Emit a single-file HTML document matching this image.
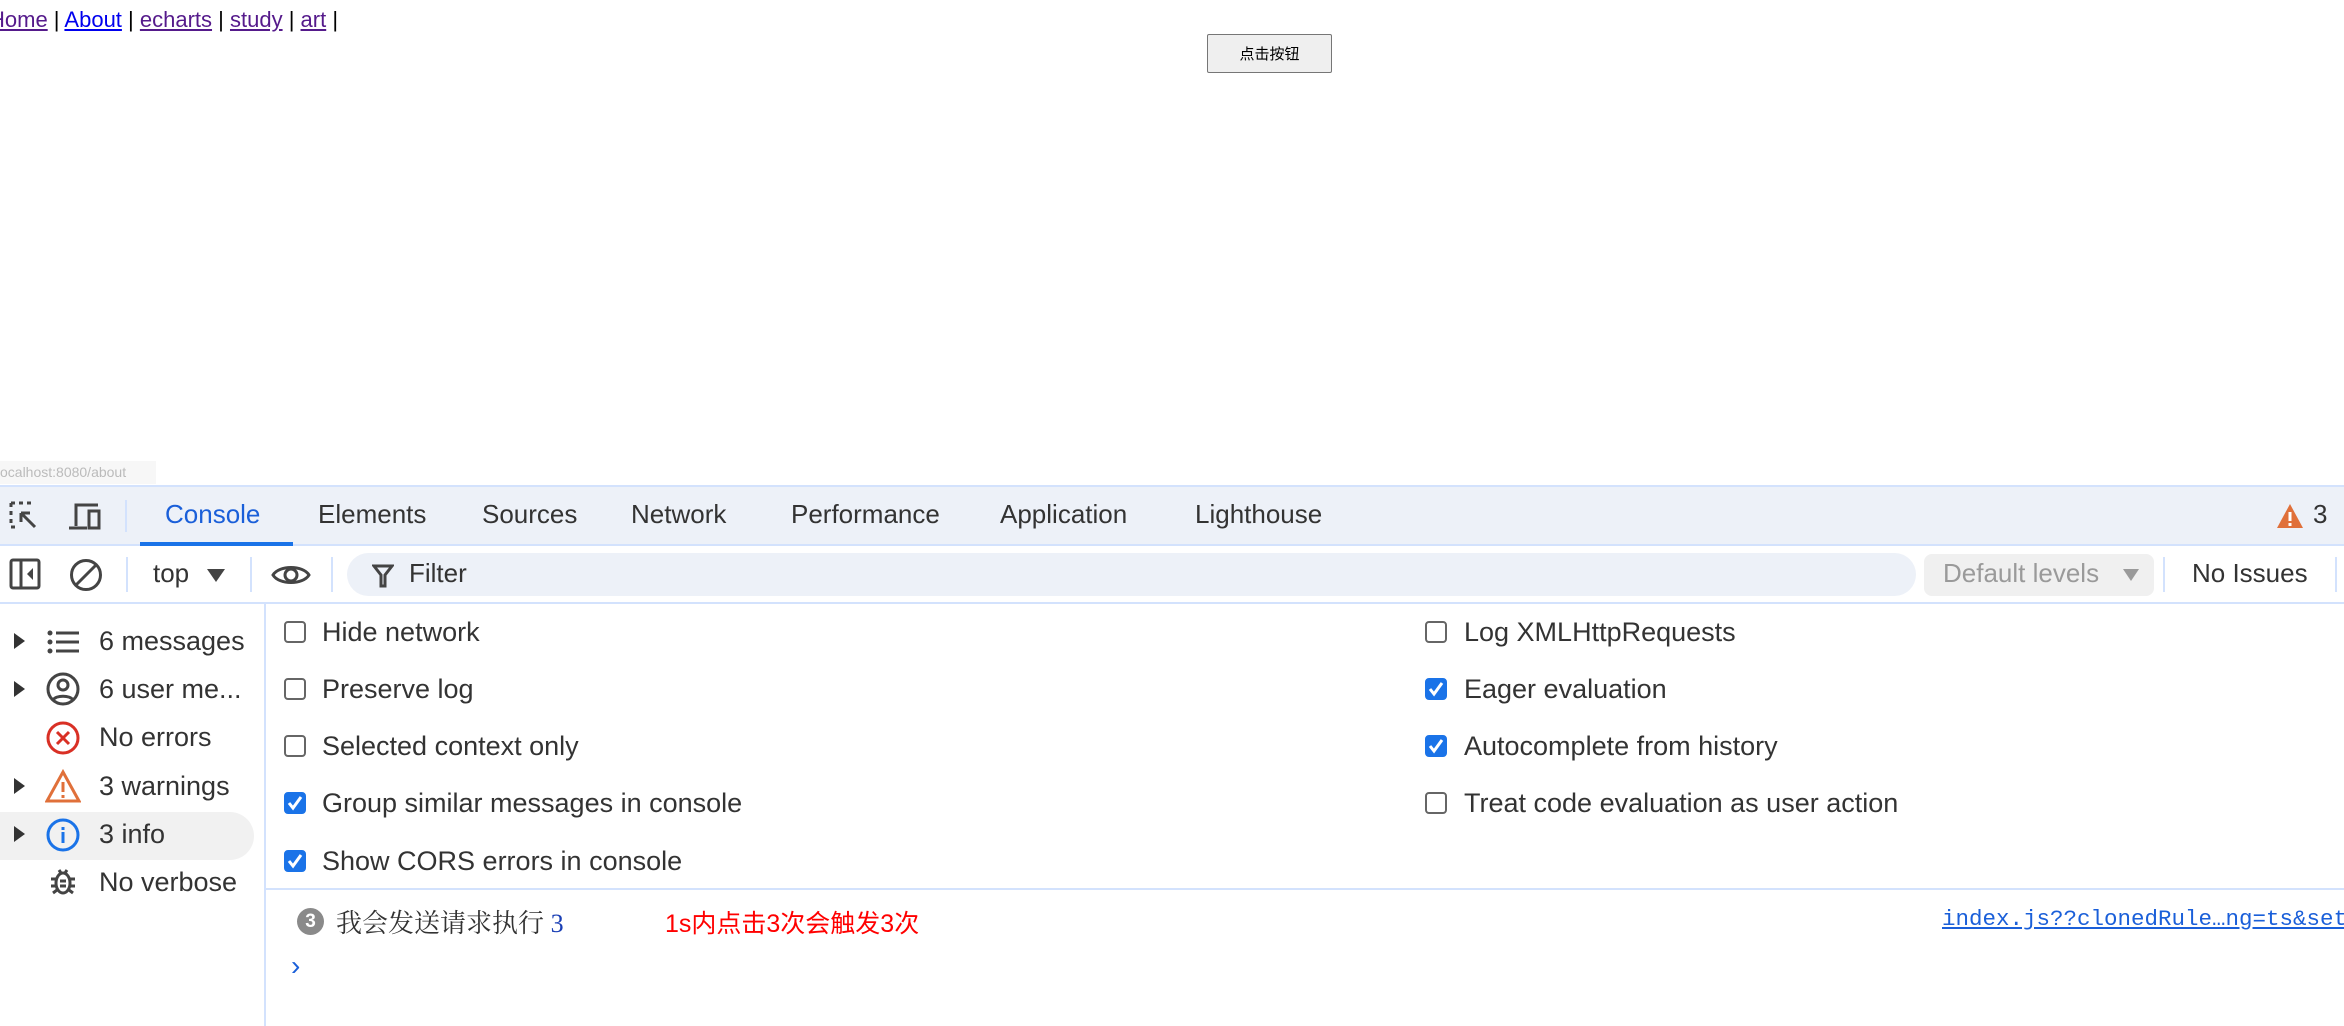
<!DOCTYPE html>
<html><head><meta charset="utf-8"><style>
*{margin:0;padding:0;box-sizing:border-box}
body{width:2344px;height:1026px;background:#fff;position:relative;overflow:hidden;font-family:"Liberation Sans","Noto Sans CJK SC",sans-serif;color:#333}
.a{position:absolute;white-space:nowrap}
.nav{top:7px;left:-11px;font-size:22px;color:#000}
.nav a{color:#551a8b;text-decoration:underline}
.nav a.b{color:#0000ee}
.btn{left:1207px;top:34px;width:125px;height:39px;border:1px solid #767676;border-radius:2px;background:#efefef;font-size:15px;color:#000;text-align:center;line-height:37px}
.dt{font-size:26px;color:#333}
.s{font-size:27px}
.sep{position:absolute;width:2px;background:#d3e2fd}
.cb{position:absolute;width:22px;height:22px;border:2px solid #666;border-radius:4px;background:#fff}
.cb.on{background:#1a73e8;border-color:#1a73e8}
.tri{position:absolute;width:0;height:0;border-top:8px solid transparent;border-bottom:8px solid transparent;border-left:11px solid #333}
</style></head><body>
<div class="a nav"><a>Home</a> | <a class="b">About</a> | <a>echarts</a> | <a>study</a> | <a>art</a> |</div>
<div class="a btn" style="font-family:'Noto Sans CJK SC',sans-serif">点击按钮</div>
<div class="a" style="left:0;top:461px;width:156px;height:23px;background:#f7f7f7;font-size:14px;color:#bbb;line-height:23px;padding-left:0">ocalhost:8080/about</div>

<div class="a" style="left:0;top:485px;width:2344px;height:61px;background:#edf1f8;border-top:2px solid #d3e2fd;border-bottom:2px solid #d3e2fd"></div>
<svg class="a" style="left:8px;top:500px" width="34" height="34" viewBox="0 0 34 34" fill="none" stroke="#444" stroke-width="3"><path d="M3 3h4M11 3h4M19 3h4M3 3v4M3 11v4M3 19v4M3 27h4" /><path d="M13 13l14 14M13 13h9M13 13v9"/></svg>
<svg class="a" style="left:66px;top:500px" width="38" height="34" viewBox="0 0 38 34" fill="none" stroke="#444" stroke-width="3"><path d="M10 26V5h22"/><path d="M3 28h18"/><rect x="23" y="11" width="10" height="17"/></svg>
<div class="sep" style="left:125px;top:500px;height:32px"></div>
<div class="a dt" style="left:165px;top:499px;color:#1a5fd9">Console</div>
<div class="a" style="left:140px;top:542px;width:153px;height:4px;background:#1a73e8"></div>
<div class="a dt" style="left:318px;top:499px">Elements</div>
<div class="a dt" style="left:482px;top:499px">Sources</div>
<div class="a dt" style="left:631px;top:499px">Network</div>
<div class="a dt" style="left:791px;top:499px">Performance</div>
<div class="a dt" style="left:1000px;top:499px">Application</div>
<div class="a dt" style="left:1195px;top:499px">Lighthouse</div>
<svg class="a" style="left:2276px;top:503px" width="28" height="26" viewBox="0 0 28 26"><path d="M14 1L27 25H1Z" fill="#e0703a"/><rect x="12.5" y="9" width="3" height="9" fill="#fff"/><rect x="12.5" y="20" width="3" height="3" fill="#fff"/></svg>
<div class="a dt" style="left:2313px;top:499px">3</div>

<svg class="a" style="left:9px;top:558px" width="32" height="32" viewBox="0 0 32 32" fill="none" stroke="#444" stroke-width="3"><rect x="2" y="2" width="28" height="28" rx="2"/><path d="M12 2v28"/><path d="M24 10l-6 6 6 6z" fill="#444" stroke="none"/></svg>
<svg class="a" style="left:69px;top:558px" width="34" height="34" viewBox="0 0 34 34" fill="none" stroke="#444" stroke-width="3"><circle cx="17" cy="17" r="14.5"/><path d="M27 7L7 27"/></svg>
<div class="sep" style="left:126px;top:557px;height:35px"></div>
<div class="a dt" style="left:153px;top:558px">top</div>
<div class="a" style="left:207px;top:569px;border-left:9px solid transparent;border-right:9px solid transparent;border-top:13px solid #444;width:0"></div>
<div class="sep" style="left:250px;top:557px;height:35px"></div>
<svg class="a" style="left:271px;top:562px" width="40" height="26" viewBox="0 0 40 26" fill="none" stroke="#444" stroke-width="3"><path d="M2 13C8 3 32 3 38 13C32 23 8 23 2 13Z"/><circle cx="20" cy="13" r="6"/></svg>
<div class="sep" style="left:331px;top:557px;height:35px"></div>
<div class="a" style="left:347px;top:553px;width:1569px;height:43px;background:#edf1f8;border-radius:22px"></div>
<svg class="a" style="left:372px;top:564px" width="22" height="24" viewBox="0 0 22 24" fill="none" stroke="#444" stroke-width="3"><path d="M2 2h18l-7 9v11h-4V11z"/></svg>
<div class="a dt" style="left:409px;top:558px">Filter</div>
<div class="a" style="left:1924px;top:554px;width:230px;height:42px;background:#f0f0f0;border-radius:8px"></div>
<div class="a dt" style="left:1943px;top:558px;color:#9a9a9a">Default levels</div>
<div class="a" style="left:2123px;top:569px;border-left:8px solid transparent;border-right:8px solid transparent;border-top:12px solid #9a9a9a;width:0"></div>
<div class="sep" style="left:2163px;top:557px;height:35px"></div>
<div class="a dt" style="left:2192px;top:558px">No Issues</div>
<div class="sep" style="left:2335px;top:557px;height:35px"></div>
<div class="a" style="left:0;top:602px;width:2344px;height:2px;background:#d3e2fd"></div>

<div class="a" style="left:264px;top:604px;width:2px;height:422px;background:#d3e2fd"></div>
<div class="a" style="left:0;top:812px;width:254px;height:48px;background:#f1f1f1;border-radius:0 24px 24px 0"></div>
<div class="tri" style="left:14px;top:633px"></div>
<svg class="a" style="left:47px;top:630px" width="34" height="24" viewBox="0 0 34 24" fill="#444"><circle cx="3" cy="3" r="2.5"/><circle cx="3" cy="12" r="2.5"/><circle cx="3" cy="21" r="2.5"/><rect x="9" y="1.5" width="23" height="3"/><rect x="9" y="10.5" width="23" height="3"/><rect x="9" y="19.5" width="23" height="3"/></svg>
<div class="a dt s" style="left:99px;top:626px">6 messages</div>
<div class="tri" style="left:14px;top:681px"></div>
<svg class="a" style="left:46px;top:672px" width="34" height="34" viewBox="0 0 34 34" fill="none" stroke="#444" stroke-width="3"><circle cx="17" cy="17" r="15"/><circle cx="17" cy="13" r="5"/><path d="M7 28c3-5 17-5 20 0"/></svg>
<div class="a dt s" style="left:99px;top:674px">6 user me...</div>
<svg class="a" style="left:46px;top:721px" width="34" height="34" viewBox="0 0 34 34" fill="none" stroke="#d93025" stroke-width="3"><circle cx="17" cy="17" r="15"/><path d="M11 11l12 12M23 11L11 23"/></svg>
<div class="a dt s" style="left:99px;top:722px">No errors</div>
<div class="tri" style="left:14px;top:778px"></div>
<svg class="a" style="left:45px;top:769px" width="36" height="34" viewBox="0 0 36 34" fill="none" stroke="#e0703a" stroke-width="3"><path d="M18 3L34 32H2Z"/><path d="M18 13v10M18 26v3"/></svg>
<div class="a dt s" style="left:99px;top:771px">3 warnings</div>
<div class="tri" style="left:14px;top:826px"></div>
<svg class="a" style="left:46px;top:818px" width="34" height="34" viewBox="0 0 34 34" fill="none" stroke="#1a73e8" stroke-width="3"><circle cx="17" cy="17" r="15"/><path d="M17 14v11M17 9v3"/></svg>
<div class="a dt s" style="left:99px;top:819px">3 info</div>
<svg class="a" style="left:49px;top:865px" width="28" height="32" viewBox="0 0 28 32" fill="none" stroke="#444" stroke-width="3"><ellipse cx="14" cy="18" rx="7" ry="10"/><path d="M10 5l2 3M18 5l-2 3M2 14h5M21 14h5M2 21h5M21 21h5M4 28l4-3M24 28l-4-3M11 16h6M11 21h6"/></svg>
<div class="a dt s" style="left:99px;top:867px">No verbose</div>

<div class="cb" style="left:284px;top:621px"></div><div class="a dt s" style="left:322px;top:617px">Hide network</div>
<div class="cb" style="left:284px;top:678px"></div><div class="a dt s" style="left:322px;top:674px">Preserve log</div>
<div class="cb" style="left:284px;top:735px"></div><div class="a dt s" style="left:322px;top:731px">Selected context only</div>
<div class="cb on" style="left:284px;top:792px"><svg width="18" height="18" viewBox="0 0 18 18" style="position:absolute;left:0;top:0" fill="none" stroke="#fff" stroke-width="3"><path d="M3 9l4 5 8-11"/></svg></div><div class="a dt s" style="left:322px;top:788px">Group similar messages in console</div>
<div class="cb on" style="left:284px;top:850px"><svg width="18" height="18" viewBox="0 0 18 18" style="position:absolute;left:0;top:0" fill="none" stroke="#fff" stroke-width="3"><path d="M3 9l4 5 8-11"/></svg></div><div class="a dt s" style="left:322px;top:846px">Show CORS errors in console</div>
<div class="cb" style="left:1425px;top:621px"></div><div class="a dt s" style="left:1464px;top:617px">Log XMLHttpRequests</div>
<div class="cb on" style="left:1425px;top:678px"><svg width="18" height="18" viewBox="0 0 18 18" style="position:absolute;left:0;top:0" fill="none" stroke="#fff" stroke-width="3"><path d="M3 9l4 5 8-11"/></svg></div><div class="a dt s" style="left:1464px;top:674px">Eager evaluation</div>
<div class="cb on" style="left:1425px;top:735px"><svg width="18" height="18" viewBox="0 0 18 18" style="position:absolute;left:0;top:0" fill="none" stroke="#fff" stroke-width="3"><path d="M3 9l4 5 8-11"/></svg></div><div class="a dt s" style="left:1464px;top:731px">Autocomplete from history</div>
<div class="cb" style="left:1425px;top:792px"></div><div class="a dt s" style="left:1464px;top:788px">Treat code evaluation as user action</div>
<div class="a" style="left:266px;top:888px;width:2078px;height:2px;background:#d3e2fd"></div>

<div class="a" style="left:297px;top:908px;width:27px;height:27px;border-radius:50%;background:#8a8a8a;color:#fff;font-size:19px;text-align:center;line-height:27px;font-weight:bold">3</div>
<div class="a" style="left:336px;top:903px;font-size:26px;color:#333;font-family:'Noto Serif CJK SC',serif">我会发送请求执行 <span style="color:#1a3fb5;font-family:'Liberation Serif',serif">3</span></div>
<div class="a" style="left:665px;top:904px;font-size:25px;color:#f00;font-family:'Liberation Sans','Noto Sans CJK SC',sans-serif">1s内点击3次会触发3次</div>
<div class="a" style="left:1942px;top:906px;font-size:22.5px;color:#1a5fd9;font-family:'Liberation Mono',monospace;text-decoration:underline">index.js??clonedRule…ng=ts&amp;set</div>
<div class="a" style="left:291px;top:950px;font-size:28px;color:#1a5fd9">›</div>
</body></html>
